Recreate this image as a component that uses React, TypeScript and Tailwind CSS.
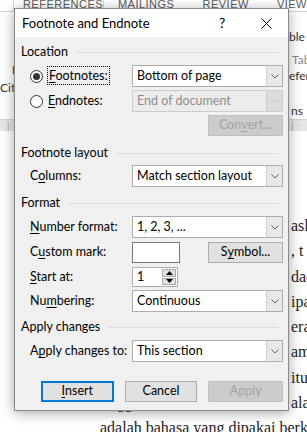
import React from 'react';

const ui = "font-['Lato',sans-serif] text-[12.5px] text-black";

function Key({ children }: { children: React.ReactNode }) {
  return <span className="underline underline-offset-[2px] decoration-[1px]">{children}</span>;
}

function Chevron({ disabled }: { disabled?: boolean }) {
  return (
    <svg width="8" height="5" viewBox="0 0 8 5">
      <path d="M0.5 0.5 L4 4 L7.5 0.5" fill="none" stroke={disabled ? '#bdbdbd' : '#606060'} strokeWidth="1" />
    </svg>
  );
}

function Combo({ value, disabled }: { value: string; disabled?: boolean }) {
  return (
    <div
      className={`flex h-[22px] w-[151px] border ${
        disabled ? 'border-[#cccccc] bg-[#ececec] text-[#8c8c8c]' : 'border-[#adadad] bg-white'
      }`}
    >
      <div className="flex flex-1 items-center pl-[4px] leading-none">{value}</div>
      <div
        className={`flex w-[16px] items-center justify-center border-l ${
          disabled ? 'border-[#cccccc] bg-[#dcdcdc]' : 'border-[#cfcfcf] bg-[#e8e8e8]'
        }`}
      >
        <Chevron disabled={disabled} />
      </div>
    </div>
  );
}

function Btn({ children, disabled, primary, w = 'w-[75px]' }: { children: React.ReactNode; disabled?: boolean; primary?: boolean; w?: string }) {
  return (
    <div
      className={`flex h-[21px] ${w} items-center justify-center leading-none ${
        disabled
          ? 'border border-[#bfbfbf] bg-[#cccccc] text-[#a3a3a3]'
          : primary
          ? 'border-2 border-[#0078d7] bg-[#e1e1e1]'
          : 'border border-[#adadad] bg-[#e1e1e1]'
      }`}
    >
      {children}
    </div>
  );
}

function Group({ title, mt }: { title: string; mt: string }) {
  return (
    <div className={`flex h-[16px] items-center gap-[8px] pr-[4px] ${mt}`}>
      <span className="leading-none">{title}</span>
      <div className="h-px flex-1 bg-[#dcdcdc]" />
    </div>
  );
}

function Row({ label, children, mt }: { label: React.ReactNode; children: React.ReactNode; mt: string }) {
  return (
    <div className={`flex items-center pl-[9px] ${mt}`}>
      <div className="w-[102px] shrink-0 whitespace-nowrap leading-none">{label}</div>
      {children}
    </div>
  );
}

function Radio({ checked }: { checked?: boolean }) {
  return (
    <div className="flex h-[13px] w-[13px] shrink-0 items-center justify-center rounded-full border border-[#333333] bg-white">
      {checked && <div className="h-[7px] w-[7px] rounded-full bg-[#333333]" />}
    </div>
  );
}

function Dialog() {
  return (
    <div className={`absolute left-[14px] top-[8px] flex h-[403px] w-[275px] flex-col border border-[#8a8a8a] bg-[#f0f0f0] shadow-[0_2px_12px_rgba(0,0,0,0.35)] ${ui}`}>
      <div className="flex h-[28px] items-center bg-white pl-[7px]">
        <span className="flex-1 text-[13px] leading-none">Footnote and Endnote</span>
        <span className="w-[14px] text-[14px] leading-none">?</span>
        <svg width="11" height="11" viewBox="0 0 11 11" className="ml-[28px] mr-[16px]">
          <path d="M0.5 0.5 L10.5 10.5 M10.5 0.5 L0.5 10.5" stroke="#000" strokeWidth="1" />
        </svg>
      </div>

      <div className="flex flex-col pl-[6px] pr-[5px]">
        <Group title="Location" mt="mt-[7px]" />
        <div className="mt-[5px] flex items-center pl-[9px]">
          <Radio checked />
          <span className="ml-[4px] w-[85px] shrink-0 leading-none">
            <span className="border border-dotted border-black px-[1px] py-[1px]">
              <Key>F</Key>ootnotes:
            </span>
          </span>
          <Combo value="Bottom of page" />
        </div>
        <div className="mt-[3px] flex items-center pl-[9px]">
          <Radio />
          <span className="ml-[5px] w-[84px] shrink-0 leading-none">
            <Key>E</Key>ndnotes:
          </span>
          <Combo value="End of document" disabled />
        </div>
        <div className="mt-[3px] flex justify-end">
          <Btn disabled>
            Con<Key>v</Key>ert...
          </Btn>
        </div>

        <Group title="Footnote layout" mt="mt-[9px]" />
        <Row label={<>C<Key>o</Key>lumns:</>} mt="mt-[4px]">
          <Combo value="Match section layout" />
        </Row>

        <Group title="Format" mt="mt-[8px]" />
        <Row label={<><Key>N</Key>umber format:</>} mt="mt-[5px]">
          <Combo value="1, 2, 3, ..." />
        </Row>
        <Row label={<>C<Key>u</Key>stom mark:</>} mt="mt-[4px]">
          <div className="h-[21px] w-[48px] border border-[#7a7a7a] bg-white" />
          <div className="ml-auto">
            <Btn>
              S<Key>y</Key>mbol...
            </Btn>
          </div>
        </Row>
        <Row label={<><Key>S</Key>tart at:</>} mt="mt-[4px]">
          <div className="flex h-[20px] w-[46px] border border-[#adadad] bg-white">
            <div className="flex flex-1 items-center pl-[4px] leading-none">1</div>
            <div className="flex w-[16px] flex-col gap-px p-px">
              <div className="flex flex-1 items-center justify-center border border-[#adadad] bg-[#e1e1e1]">
                <svg width="7" height="4" viewBox="0 0 7 4"><path d="M3.5 0 L7 4 L0 4 Z" fill="#000" /></svg>
              </div>
              <div className="flex flex-1 items-center justify-center border border-[#adadad] bg-[#e1e1e1]">
                <svg width="7" height="4" viewBox="0 0 7 4"><path d="M0 0 L7 0 L3.5 4 Z" fill="#000" /></svg>
              </div>
            </div>
          </div>
        </Row>
        <Row label={<>Nu<Key>m</Key>bering:</>} mt="mt-[3px]">
          <Combo value="Continuous" />
        </Row>

        <Group title="Apply changes" mt="mt-[7px]" />
        <Row label={<>A<Key>p</Key>ply changes to:</>} mt="mt-[5px]">
          <Combo value="This section" />
        </Row>

        <div className="mt-[19px] flex gap-[11px] pl-[20px]">
          <Btn primary w="w-[73px]">
            <Key>I</Key>nsert
          </Btn>
          <Btn w="w-[73px]">Cancel</Btn>
          <Btn disabled w="w-[75px]">Apply</Btn>
        </div>
      </div>
    </div>
  );
}

export default function App() {
  const lines: { left?: string; right: string }[] = [
    { right: 'asli' },
    { right: ',  t' },
    { right: 'daerah' },
    { right: 'ipakai' },
    { right: 'erah' },
    { right: 'ampai' },
    { right: 'itu' },
    { left: 'tinggi', right: 'alam' },
  ];

  return (
    <div className="relative h-[432px] w-[307px] overflow-hidden bg-white">
      {/* ribbon tabs */}
      <div className="flex h-[12px] text-[11px] leading-none tracking-[0.5px] text-[#5a5a5a] font-['Liberation_Sans',sans-serif]">
        <div className="w-[13px] border-b border-[#d4d4d4]" />
        <div className="w-[91px] border-x border-[#d4d4d4] pl-[9px]">
          <div className="-mt-[1px]">REFERENCES</div>
        </div>
        <div className="flex flex-1 gap-[28px] border-b border-[#d4d4d4] pl-[14px]">
          <div className="-mt-[1px]">MAILINGS</div>
          <div className="-mt-[1px]">REVIEW</div>
          <div className="-mt-[1px]">VIEW</div>
        </div>
      </div>

      {/* ribbon body */}
      <div className="flex h-[108px] justify-between border-b border-[#d4d4d4] text-[12px] leading-none text-[#333] font-['Lato',sans-serif]">
        <div className="flex w-[14px] flex-col">
          <div className="mt-[52px] pl-[12px]">I</div>
          <div className="mt-[6px]">Cit</div>
        </div>
        <div className="flex w-[18px] flex-col whitespace-nowrap">
          <div className="mt-[19px]">ble</div>
          <div className="mt-[11px] pl-[3px] text-[#8a8a8a]">Tab</div>
          <div className="mt-[4px]">efer</div>
          <div className="mt-[23px] pl-[2px]">ns</div>
        </div>
      </div>

      {/* ruler */}
      <div className="flex h-[11px] items-center justify-between bg-[#e6e6e6] px-[6px] text-[8px] leading-none text-[#9a9a9a]">
        <span>|</span>
        <span className="mr-[2px]">| ·</span>
      </div>

      {/* document */}
      <div className="pt-[82px] text-[16px] leading-[25.3px] text-[#222] font-['Liberation_Serif',serif]">
        {lines.map((l, i) => (
          <div key={i} className="flex whitespace-nowrap">
            <span className="w-[100px] shrink-0" />
            <span className="w-[189px] shrink-0">{l.left}</span>
            <span className="shrink-0 pl-[2px]">{l.right}</span>
          </div>
        ))}
        <div className="whitespace-nowrap pl-[100px]">adalah bahasa yang dipakai berkomunikasi</div>
      </div>

      <Dialog />
    </div>
  );
}
